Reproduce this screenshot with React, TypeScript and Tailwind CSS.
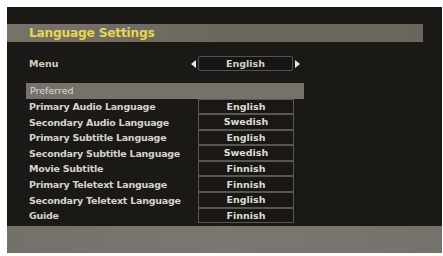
import React from "react";

const rows = [
  { label: "Primary Audio Language", value: "English" },
  { label: "Secondary Audio Language", value: "Swedish" },
  { label: "Primary Subtitle Language", value: "English" },
  { label: "Secondary Subtitle Language", value: "Swedish" },
  { label: "Movie Subtitle", value: "Finnish" },
  { label: "Primary Teletext Language", value: "Finnish" },
  { label: "Secondary Teletext Language", value: "English" },
  { label: "Guide", value: "Finnish" },
];

const App = () => {
  return (
    <div
      className="w-[443px] h-[256px] bg-white pt-[7px] pl-[7px] overflow-hidden"
      style={{ fontFamily: '"DejaVu Sans", "Liberation Sans", sans-serif' }}
    >
      <div className="w-[435px] h-[246px] bg-[#1b1916] flex flex-col">
        {/* Title */}
        <div className="mt-[17px] h-[18px] w-[416px] bg-gradient-to-r from-[#77736b] via-[#6c675f] to-[#6a655d] flex items-center pl-[22px]">
          <span className="text-[12.2px] font-bold text-[#e6d64c] tracking-[-0.2px] leading-none">
            Language Settings
          </span>
        </div>

        {/* Menu row */}
        <div className="mt-[14px] h-[15px] flex items-center">
          <span className="w-[184px] pl-[22px] text-[9.5px] font-bold text-[#d2cfc0] leading-none">
            Menu
          </span>
          <span className="w-0 h-0 border-y-[4px] border-y-transparent border-r-[5px] border-r-[#e8e8e8] mr-[2px]" />
          <div className="w-[95px] h-[15px] border border-[#55524c] rounded-[2px] bg-[#161513] flex items-center justify-center">
            <span className="text-[9.5px] font-bold text-[#cfd2bd] leading-none">English</span>
          </div>
          <span className="w-0 h-0 border-y-[4px] border-y-transparent border-l-[5px] border-l-[#e8e8e8] ml-[2px]" />
        </div>

        {/* Preferred header */}
        <div className="mt-[12px] ml-[19px] w-[278px] h-[16px] bg-[#76726b] flex items-center pl-[4px]">
          <span className="text-[9.5px] text-[#dedbd4] leading-none">Preferred</span>
        </div>

        {/* Rows */}
        <div className="flex flex-col">
          {rows.map((r, i) => (
            <div key={i} className="h-[15.6px] flex items-center">
              <span className="w-[191px] pl-[22px] text-[9.5px] font-bold text-[#d6d3cc] leading-none whitespace-nowrap tracking-[-0.25px]">
                {r.label}
              </span>
              <div className="w-[96px] h-full border border-[#595650] -mt-px first:mt-0 bg-[#191815] flex items-center justify-center">
                <span className="text-[9.5px] font-bold text-[#dedcd6] leading-none">{r.value}</span>
              </div>
            </div>
          ))}
        </div>

        <div className="flex-1" />
        <div className="h-[27px] bg-gradient-to-r from-[#74716b] via-[#7a7770] to-[#75726c]" />
      </div>
    </div>
  );
};

export default App;
